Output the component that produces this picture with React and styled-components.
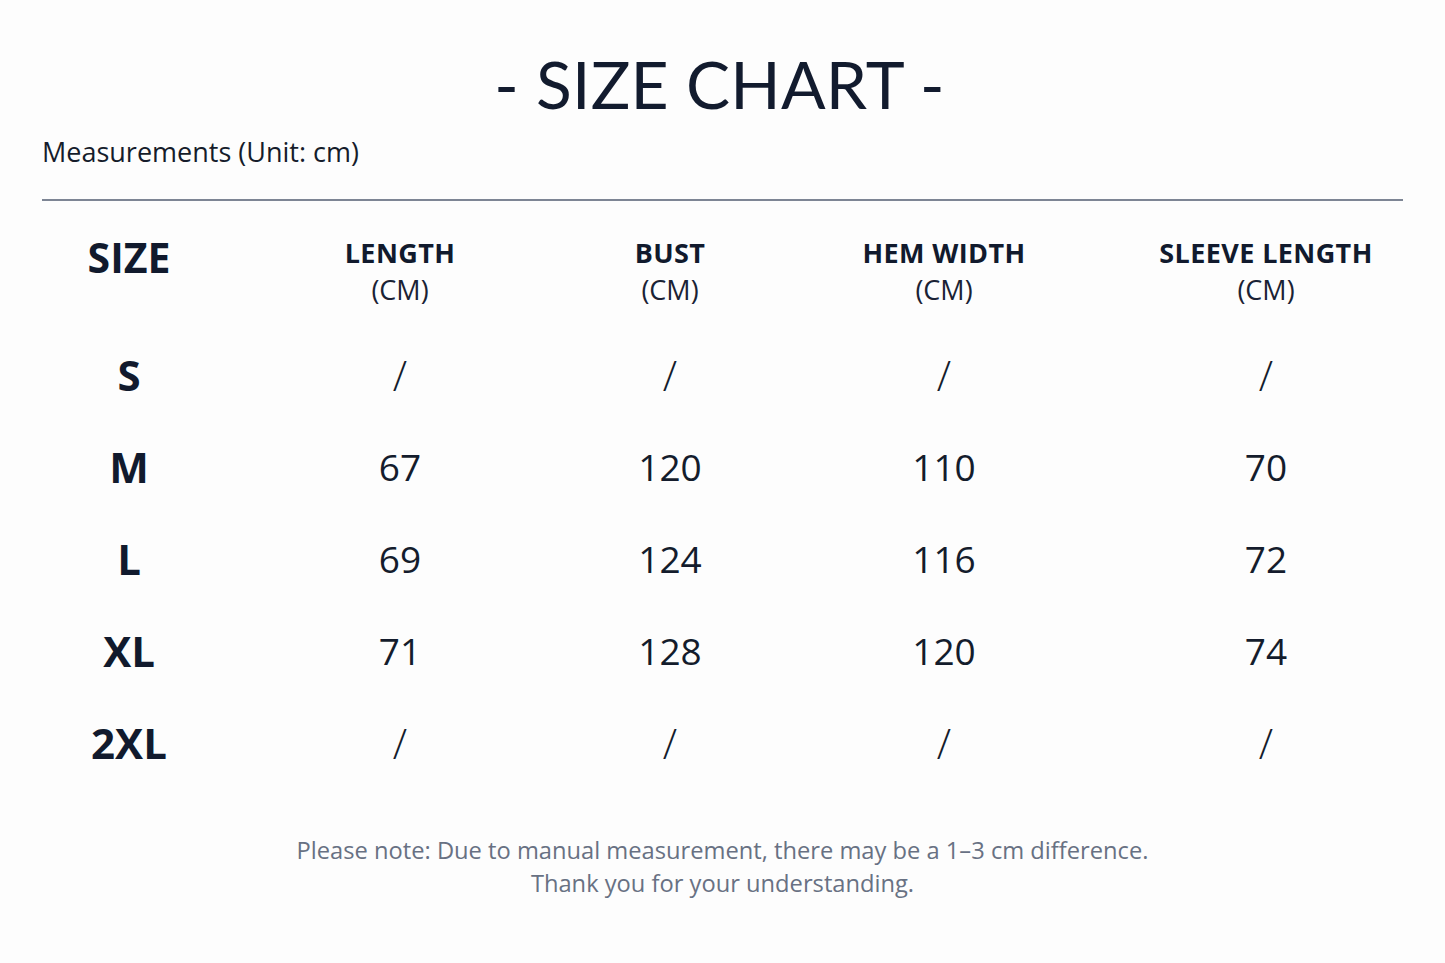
import React from "react";
import styled, { createGlobalStyle } from "styled-components";

const Global = createGlobalStyle`
  html, body { margin: 0; padding: 0; background: #fdfdfd; }
  body { font-family: "Open Sans", "Noto Sans", sans-serif; color: #111a2d; }
`;

const Page = styled.div`
  width: 1445px;
  height: 963px;
  box-sizing: border-box;
  display: flex;
  flex-direction: column;
  padding-top: 44px;
`;

const Title = styled.h1`
  margin: 0;
  text-align: center;
  font-family: "Lato", "Noto Sans", sans-serif;
  font-weight: 400;
  font-size: 66px;
  line-height: 80px;
  letter-spacing: 0.2px;
  color: #121b2e;
  padding-right: 6px;
`;

const Subtitle = styled.div`
  margin: 10px 0 0 42px;
  font-size: 27px;
  line-height: 36px;
  color: #151c2b;
`;

const Rule = styled.hr`
  margin: 29px 42px 0 42px;
  border: 0;
  height: 2px;
  background: #7d8594;
`;

const Grid = styled.div`
  display: grid;
  grid-template-columns: 258px 284px 256px 292px 352px;
  grid-auto-rows: ${(p) => p.$rowHeight}px;
`;

const HeadCell = styled.div`
  display: flex;
  flex-direction: column;
  align-items: center;
  justify-content: flex-start;
  padding-top: ${(p) => (p.$main ? "34px" : "35px")};
  box-sizing: border-box;
`;

const SizeHead = styled.div`
  font-weight: 700;
  font-size: 41px;
  line-height: 44px;
  color: #111a2d;
`;

const ColLabel = styled.div`
  font-weight: 700;
  font-size: 27px;
  line-height: 34px;
  letter-spacing: 0.4px;
  color: #111a2d;
`;

const ColUnit = styled.div`
  font-weight: 400;
  font-size: 27px;
  line-height: 40px;
  color: #1a2234;
`;

const SizeCell = styled.div`
  display: flex;
  align-items: center;
  justify-content: center;
  font-weight: 700;
  font-size: 42px;
  color: #111a2d;
`;

const ValueCell = styled.div`
  display: flex;
  align-items: center;
  justify-content: center;
  font-weight: ${(p) => (p.$empty ? 300 : 400)};
  font-size: ${(p) => (p.$empty ? "42px" : "37px")};
  color: #141c2c;
`;

const Footer = styled.div`
  margin-top: 46px;
  text-align: center;
  font-size: 23.7px;
  line-height: 33px;
  color: #687183;
`;

const columns = [
  { label: "LENGTH", key: "length" },
  { label: "BUST", key: "bust" },
  { label: "HEM WIDTH", key: "hem" },
  { label: "SLEEVE LENGTH", key: "sleeve" },
];

const rows = [
  { size: "S", length: "/", bust: "/", hem: "/", sleeve: "/" },
  { size: "M", length: "67", bust: "120", hem: "110", sleeve: "70" },
  { size: "L", length: "69", bust: "124", hem: "116", sleeve: "72" },
  { size: "XL", length: "71", bust: "128", hem: "120", sleeve: "74" },
  { size: "2XL", length: "/", bust: "/", hem: "/", sleeve: "/" },
];

export default function App() {
  return (
    <>
      <Global />
      <Page>
        <Title>- SIZE CHART -</Title>
        <Subtitle>Measurements (Unit: cm)</Subtitle>
        <Rule />
        <Grid $rowHeight={127}>
          <HeadCell $main>
            <SizeHead>SIZE</SizeHead>
          </HeadCell>
          {columns.map((c) => (
            <HeadCell key={c.key}>
              <ColLabel>{c.label}</ColLabel>
              <ColUnit>(CM)</ColUnit>
            </HeadCell>
          ))}
        </Grid>
        <Grid $rowHeight={92}>
          {rows.map((r) => (
            <React.Fragment key={r.size}>
              <SizeCell>{r.size}</SizeCell>
              {columns.map((c) => (
                <ValueCell key={c.key} $empty={r[c.key] === "/"}>
                  {r[c.key]}
                </ValueCell>
              ))}
            </React.Fragment>
          ))}
        </Grid>
        <Footer>
          Please note: Due to manual measurement, there may be a 1–3 cm difference.
          <br />
          Thank you for your understanding.
        </Footer>
      </Page>
    </>
  );
}
